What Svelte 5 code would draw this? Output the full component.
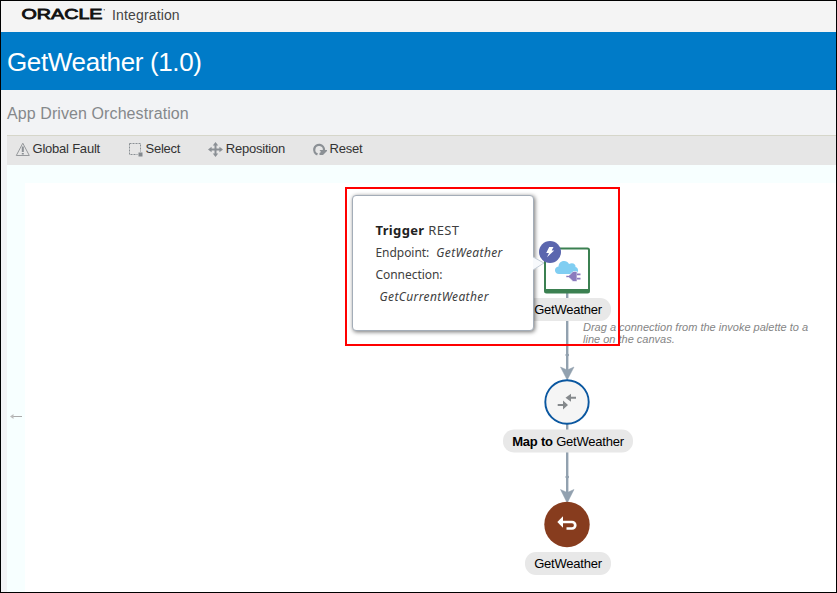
<script lang="ts">
  type Tool = { id: string; label: string; gap: number };

  const tools: Tool[] = [
    { id: 'fault', label: 'Global Fault', gap: 28 },
    { id: 'select', label: 'Select', gap: 28 },
    { id: 'move', label: 'Reposition', gap: 27 },
    { id: 'reset', label: 'Reset', gap: 0 }
  ];

  const trigger = {
    type: 'REST',
    endpoint: 'GetWeather',
    connection: 'GetCurrentWeather'
  };

  // Pills under the nodes, in canvas coordinates
  const labels = [
    { x: 518, y: 133, width: 86, bold: '', text: 'GetWeather' },
    { x: 496, y: 264.5, width: 130, bold: 'Map to', text: 'GetWeather' },
    { x: 518, y: 387, width: 86, bold: '', text: 'GetWeather' }
  ];
</script>

<div class="app">
  <header class="brand">
    <svg class="logo" width="86" height="16" viewBox="0 0 86 16">
      <text x="0.5" y="13" textLength="81" lengthAdjust="spacingAndGlyphs">ORACLE</text>
      <circle cx="83.3" cy="3.8" r="0.8" fill="#777" />
    </svg>
    <span class="product">Integration</span>
  </header>

  <div class="title-bar"><h1>GetWeather (1.0)</h1></div>
  <div class="subtitle">App Driven Orchestration</div>

  <div class="workspace">
    <nav class="toolbar">
      {#each tools as tool}
        <button class="tool" style="margin-right: {tool.gap}px">
          <svg width="15" height="15" viewBox="0 0 15 15" fill="none" stroke="#8b9095">
            {#if tool.id === 'fault'}
              <path d="M7.8 1.2L14.3 13.5H1.3Z" stroke="#96999c" stroke-linejoin="round" />
              <path d="M7.8 4.5V10M7.8 11V12.5" stroke-width="2" />
            {:else if tool.id === 'select'}
              <rect x="1.5" y="1.5" width="11" height="11" stroke-dasharray="2 1" />
              <rect x="10" y="10" width="5" height="5" fill="#858a8f" stroke="#e6e6e6" />
            {:else if tool.id === 'move'}
              <path d="M7.5 2V13M2 7.5H13" stroke-width="2" />
              <path d="M7.5 0L10.2 3.6H4.8ZM7.5 15L10.2 11.4H4.8ZM0 7.5L3.6 4.8V10.2ZM15 7.5L11.4 4.8V10.2Z" fill="#8b9095" stroke="none" />
            {:else}
              <path d="M5.5 12.4A4.9 4.9 0 1 1 12 8" stroke-width="2.3" />
              <path d="M7.5 8H15V9L11 13H7.5V11L9 10Z" fill="#8b9095" stroke="none" />
            {/if}
          </svg>
          <span>{tool.label}</span>
        </button>
      {/each}
    </nav>

    <main class="canvas">
      <svg class="flow" width="829" height="427" viewBox="0 0 829 427">
        <g class="edges">
          <path d="M560.2 128V207M560.2 258V329" />
          <path class="head" d="M553.5 202L560.2 205L567 202L560.2 215ZM553.5 324.5L560.2 327.5L567 324.5L560.2 338Z" />
          <circle cx="560.2" cy="190" r="1.3" />
          <circle cx="560.2" cy="312" r="1.3" />
        </g>

        <g class="trigger">
          <rect x="538" y="83.5" width="44" height="44" rx="1.5" fill="#fff" stroke="#3b8051" stroke-width="2" />
          <path d="M538 124H582V126.5Q582 128 580.5 128H539.5Q538 128 538 126.5Z" fill="#3b8051" />
          <path d="M552 109C547 109 546.5 102 551.5 101.5C552 95 560 94.5 562 99C566 97 569 99.5 568.5 102C572.5 103 571.5 109 568 109Z" fill="#80cef2" />
          <path d="M559 110.5H562L566 106.5H570V116.5H566L562 112.5H559Z" fill="#8b7bbd" stroke="#fff" stroke-width="0.6" />
          <path d="M570 109.3H573.5M570 113.6H573.5" stroke="#8b7bbd" stroke-width="1.8" />
          <circle cx="543" cy="87" r="11" fill="#5b66ae" />
          <path d="M542.2 82H546.5L544.7 85.5H547.2L540 92.2L542 88H539.2Z" fill="#fff" />
        </g>

        <g class="mapper">
          <circle cx="560" cy="237" r="21.7" fill="#f5f5f5" stroke="#0a57a0" stroke-width="1.9" />
          <path d="M550.7 239H556V235.5L561 240L556 244.5V241H550.7ZM569 231.7H564V228.7L558.5 232.7L564 236.8V233.8H569Z" fill="#85898c" />
        </g>

        <g class="response">
          <circle cx="560" cy="359.5" r="22.7" fill="#873c1e" />
          <path d="M555 357H565A3.1 3.1 0 0 1 565 363.5H559.5" fill="none" stroke="#fff" stroke-width="2.7" />
          <path d="M550.3 357L556 351.3V362.7Z" fill="#fff" />
        </g>

        {#each labels as label}
          <rect x={label.x} y={label.y} width={label.width} height="23" rx="11" fill="#e8e8e8" />
          <text class="label" x={label.x + label.width / 2} y={label.y + 16} text-anchor="middle">
            {#if label.bold}<tspan font-weight="bold">{label.bold}</tspan>{' '}{/if}{label.text}
          </text>
        {/each}

        <text class="hint" x="576" y="166">Drag a connection from the invoke palette to a</text>
        <text class="hint" x="576" y="178">line on the canvas.</text>

        <path d="M5 251.5H15" stroke="#aaa" fill="none" />
        <path d="M3 251.5L6.5 249V254Z" fill="#bbb" />
      </svg>

      <div class="highlight"></div>

      <div class="tooltip">
        <p class="heading"><b>Trigger</b> {trigger.type}</p>
        <p>Endpoint: <i class="endpoint">{trigger.endpoint}</i></p>
        <p>Connection:</p>
        <p class="connection"><i>{trigger.connection}</i></p>
        <svg class="pointer" width="12" height="16" viewBox="0 0 12 16">
          <path d="M0 1L11 7L0 14Z" fill="#f7f9fc" />
          <path d="M0 1L11 7L0 14" fill="none" stroke="#c5ced9" />
        </svg>
      </div>
    </main>
  </div>
</div>

<style>
  :global(body) {
    margin: 0;
    overflow: hidden;
  }

  .app {
    box-sizing: border-box;
    width: 837px;
    height: 593px;
    display: flex;
    flex-direction: column;
    border: 1px solid #000;
    background: #f2f3f5;
    font-family: "Liberation Sans", Arial, sans-serif;
    overflow: hidden;
  }

  .brand {
    height: 31px;
    display: flex;
    flex: none;
    background: #f4f4f4;
    padding-left: 20px;
  }

  .logo {
    margin-top: 5px;
  }

  .logo text {
    font-size: 13.8px;
    fill: #111;
    stroke: #111;
    stroke-width: 0.8px;
  }

  .product {
    margin: 6px 0 0 5px;
    font-size: 14px;
    line-height: 17px;
    letter-spacing: 0.15px;
    color: #444;
  }

  .title-bar {
    height: 58px;
    flex: none;
    background: #007bc8;
    padding-left: 6px;
  }

  h1 {
    margin: 0;
    font-size: 26px;
    font-weight: 400;
    line-height: 61px;
    letter-spacing: -0.36px;
    color: #fff;
  }

  .subtitle {
    height: 45px;
    flex: none;
    padding-left: 6px;
    font-size: 16px;
    line-height: 47px;
    letter-spacing: 0.09px;
    color: #85888b;
  }

  .workspace {
    flex: 1;
    display: flex;
    flex-direction: column;
    margin-left: 6px;
  }

  .toolbar {
    box-sizing: border-box;
    height: 30px;
    display: flex;
    align-items: flex-start;
    padding: 5px 0 0 8px;
    border-top: 1px solid #d6d6ca;
    background: #e6e6e6;
  }

  .tool {
    display: flex;
    gap: 2.5px;
    padding: 0;
    border: 0;
    background: none;
    font: 13px/15px "Liberation Sans", Arial, sans-serif;
    letter-spacing: -0.22px;
    color: #333;
    white-space: nowrap;
  }

  .tool svg {
    margin-top: 1px;
  }

  .canvas {
    box-sizing: border-box;
    position: relative;
    flex: 1;
    border-top: 18px solid #f7ffff;
    border-left: 18px solid #f7ffff;
    background: #fff;
  }

  .flow {
    position: absolute;
    top: -18px;
    left: -18px;
  }

  .edges {
    fill: #92a1af;
    stroke: #92a1af;
    stroke-width: 2.4;
  }

  .edges .head {
    stroke-width: 0.5;
  }

  .edges circle {
    stroke-width: 1;
  }

  .label {
    font-size: 13px;
    letter-spacing: -0.22px;
    fill: #000;
  }

  .hint {
    font-size: 11px;
    font-style: italic;
    fill: #858585;
  }

  .highlight {
    box-sizing: border-box;
    position: absolute;
    top: 4px;
    left: 320px;
    width: 275px;
    height: 159px;
    border: 2px solid #f00;
  }

  .tooltip {
    box-sizing: border-box;
    position: absolute;
    top: 12px;
    left: 327px;
    width: 182px;
    height: 136px;
    padding: 24px 0 0 22.5px;
    border: 1px solid #a4adb8;
    border-radius: 4px;
    background: #fff;
    box-shadow: 1px 1px 4px rgba(0, 0, 0, 0.55);
    font-family: "Noto Sans", "Open Sans", sans-serif;
    font-size: 12px;
    line-height: 22px;
    letter-spacing: -0.05px;
    color: #404040;
  }

  .tooltip p {
    margin: 0;
  }

  .tooltip i {
    letter-spacing: 0.38px;
  }

  .tooltip .heading {
    margin-top: -1px;
    padding-bottom: 1px;
    font-size: 13px;
    letter-spacing: 0.35px;
  }

  .heading b {
    color: #222;
  }

  .endpoint {
    margin-left: 4px;
  }

  .tooltip .connection {
    padding-left: 4px;
  }

  .pointer {
    position: absolute;
    top: 60px;
    left: 180px;
  }
</style>
